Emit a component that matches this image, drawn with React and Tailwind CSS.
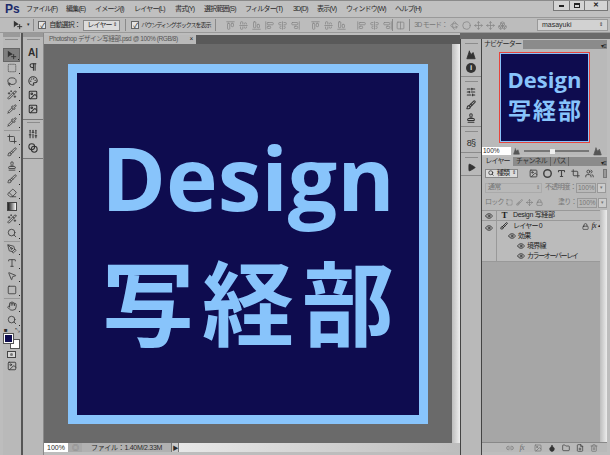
import { SquareDashed, Lasso, Wand2, Pipette, Brush, Stamp, Eraser, PenTool, Type, MousePointer2, Square, Hand, Search, Pilcrow, Palette, Image, Sliders, Eye, Lock, Link2, Folder, FilePlus, Trash2, Circle, Play, SlidersHorizontal, Crop, Blend, Boxes, Rotate3d, Mountain, Users, Droplet, Move, AlignStartVertical, AlignCenterVertical, AlignEndVertical, AlignStartHorizontal, AlignCenterHorizontal, AlignEndHorizontal, Columns2 } from "lucide-react";

const menus = [
  ["ファイル(F)", "w-[40px]"],
  ["編集(E)", "w-[29px]"],
  ["イメージ(I)", "w-[39px]"],
  ["レイヤー(L)", "w-[41px]"],
  ["書式(Y)", "w-[29px]"],
  ["選択範囲(S)", "w-[41px]"],
  ["フィルター(T)", "w-[48px]"],
  ["3D(D)", "w-[24px]"],
  ["表示(V)", "w-[29px]"],
  ["ウィンドウ(W)", "w-[49px]"],
  ["ヘルプ(H)", "w-[40px]"],
];

// arrow with a small cross, Photoshop's move tool
function MoveTool({ size = 11 }) {
  return (
    <svg width={size} height={size} viewBox="0 0 12 12" className="shrink-0 text-[#333]">
      <path d="M1 1 L1 9 L3 7 L7 5 Z" fill="currentColor" />
      <path d="M8 5 V11 M5 8 H11" stroke="currentColor" strokeWidth="1.2" />
    </svg>
  );
}

const toolsA = [
  [MoveTool, true], [SquareDashed], [Lasso], [Wand2], [Pipette], [Pipette],
  "sep", [Crop], [Brush], [Stamp], [Brush], [Eraser], "grad", [Wand2], [Search],
  "sep", [PenTool], [Type], [MousePointer2], [Square],
  "sep", [Hand], [Search],
];

function Tool({ Icon, active }) {
  return (
    <div className={`relative flex h-[13.5px] w-[17px] shrink-0 items-center justify-center ${active ? "bg-[#7f7f7f] border border-[#666]" : ""}`}>
      <Icon size={10} strokeWidth={2} className="text-[#3a3a3a]" />
      <span className="absolute bottom-[1px] right-0 h-[1px] w-[1px] bg-[#222]" />
    </div>
  );
}

function Grip() {
  return <div className="my-[2px] h-[1px] w-[13px] shrink-0 bg-[#8c8c8c]" />;
}

function PanelIcon({ Icon }) {
  return <Icon size={10} strokeWidth={2.5} className="shrink-0 text-[#333]" />;
}

function OptIcon({ Icon }) {
  return <Icon size={9} strokeWidth={2} className="shrink-0 text-[#858585]" />;
}

function Check() {
  return (
    <span className="flex h-[8px] w-[8px] shrink-0 items-center justify-center border border-[#666] bg-[#e4e4e4] text-[7px] leading-none text-[#222]">✓</span>
  );
}

function LayerRow({ children, className = "" }) {
  return <div className={`flex items-center text-[#222] ${className}`}>{children}</div>;
}

function EyeIcon() {
  return <Eye size={8} strokeWidth={2.5} className="shrink-0 text-[#333]" />;
}

export default function App() {
  return (
    <div className="flex h-[455px] w-[610px] flex-col overflow-hidden bg-[#bdbdbd] font-['Liberation_Sans','Noto_Sans_CJK_JP',sans-serif] text-[7px] tracking-[-0.8px] text-[#2b2b2b]">
      {/* menu bar */}
      <div className="flex h-[17px] shrink-0 items-center border-t border-[#8a8a8a] bg-[#c0c0c0]">
        <span className="ml-[5px] w-[21px] text-[12px] font-bold leading-none tracking-normal text-[#1b2a6b]">Ps</span>
        {menus.map(([label, w]) => (
          <span key={label} className={`${w} whitespace-nowrap`}>{label}</span>
        ))}
        <div className="ml-auto mr-[2px] flex h-[10px] w-[55px] self-start border border-t-0 border-[#777] bg-[#d4d4d4] text-[#222]">
          <span className="flex flex-1 items-center justify-center border-r border-[#777]"><span className="h-[2px] w-[5px] bg-[#222]" /></span>
          <span className="flex flex-1 items-center justify-center border-r border-[#777]"><span className="h-[5px] w-[6px] border border-t-2 border-[#222]" /></span>
          <span className="flex w-[22px] items-center justify-center text-[7px] font-bold">✕</span>
        </div>
      </div>

      {/* options bar */}
      <div className="flex h-[16px] shrink-0 items-center border-y border-[#999] bg-[#bcbcbc] pl-[13px]">
        <MoveTool size={10} />
        <span className="ml-[4px] text-[5px]">▾</span>
        <div className="mx-[4px] h-[12px] w-[1px] bg-[#8a8a8a]" />
        <Check />
        <span className="ml-[3px] w-[34px] whitespace-nowrap">自動選択：</span>
        <span className="flex h-[11px] w-[37px] items-center justify-between border border-[#888] bg-[#dcdcdc] px-[3px]">レイヤー<span className="text-[5px]">⇕</span></span>
        <div className="mx-[5px] h-[12px] w-[1px] bg-[#8a8a8a]" />
        <Check />
        <span className="ml-[2px] w-[70px] whitespace-nowrap text-[6px] tracking-[-1px]">バウンディングボックスを表示</span>
        <div className="mx-[4px] h-[12px] w-[1px] bg-[#8a8a8a]" />
        <div className="ml-[6px] flex w-[166px] items-center gap-[4px]">
          <OptIcon Icon={AlignStartHorizontal} />
          <OptIcon Icon={AlignCenterHorizontal} />
          <OptIcon Icon={AlignEndHorizontal} />
          <OptIcon Icon={AlignStartVertical} />
          <OptIcon Icon={AlignCenterVertical} />
          <OptIcon Icon={AlignEndVertical} />
          <span className="w-[3px]" />
          <OptIcon Icon={AlignStartHorizontal} />
          <OptIcon Icon={AlignCenterHorizontal} />
          <OptIcon Icon={AlignEndHorizontal} />
          <span className="w-[3px]" />
          <OptIcon Icon={AlignStartVertical} />
          <OptIcon Icon={AlignCenterVertical} />
          <OptIcon Icon={AlignEndVertical} />
        </div>
        <div className="h-[12px] w-[1px] bg-[#8a8a8a]" />
        <span className="ml-[3px]"><OptIcon Icon={Columns2} /></span>
        <div className="mx-[4px] h-[12px] w-[1px] bg-[#8a8a8a]" />
        <span className="w-[36px] whitespace-nowrap text-[#777]">3D モード：</span>
        <div className="flex items-center gap-[3px]">
          <OptIcon Icon={Rotate3d} />
          <OptIcon Icon={Circle} />
          <OptIcon Icon={Move} />
          <OptIcon Icon={Move} />
          <OptIcon Icon={Boxes} />
        </div>
        <div className="ml-auto mr-[2px] flex h-[12px] w-[71px] items-center justify-between border border-[#999] bg-[#d2d2d2] px-[4px] tracking-normal">masayuki<span className="text-[5px]">⇕</span></div>
      </div>

      {/* work area */}
      <div className="flex min-h-0 flex-1">
        {/* tools */}
        <div className="flex w-[44px] shrink-0 pl-[3px]">
          <div className="flex w-[20px] flex-col items-center border-r-2 border-[#555] bg-[#b9b9b9] pr-px">
            <div className="h-[4px] w-full shrink-0 bg-[#9a9a9a]" />
            <Grip />
            <div className="mt-[6px] flex flex-col items-center">
              {toolsA.map((t, i) => {
                if (t === "sep") return <div key={i} className="my-[1px] h-[1px] w-[16px] bg-[#999]" />;
                if (t === "grad") return <div key={i} className="my-[2px] h-[9px] w-[10px] border border-[#444] bg-gradient-to-r from-[#222] to-white" />;
                return <Tool key={i} Icon={t[0]} active={t[1]} />;
              })}
            </div>
            <div className="flex w-[15px] justify-between text-[6px] leading-none"><span>■</span><span>⤡</span></div>
            <div className="relative mt-[1px] h-[15px] w-[16px] shrink-0">
              <div className="absolute bottom-0 right-0 h-[10px] w-[10px] border border-[#555] bg-white" />
              <div className="absolute left-0 top-0 h-[9px] w-[9px] border border-white bg-[#0e0c4f] outline outline-[#555]" />
            </div>
            <div className="mt-[2px] flex h-[7px] w-[9px] items-center justify-center border border-[#444] bg-[#d8d8d8]"><span className="h-[3px] w-[3px] rounded-full bg-[#777]" /></div>
            <Image size={10} strokeWidth={2} className="mt-[3px] text-[#333]" />
          </div>
          <div className="flex w-[21px] flex-col items-center border-r border-[#8a8a8a] bg-[#b9b9b9]">
            <div className="h-[4px] w-full shrink-0 bg-[#9a9a9a]" />
            <Grip />
            <div className="mt-[6px] flex h-[72px] w-full flex-col items-center gap-[4px] border-b border-[#777]">
              <span className="text-[10px] font-bold leading-[10px] tracking-normal">A|</span>
              <Pilcrow size={10} strokeWidth={2.5} className="text-[#333]" />
              <Palette size={10} strokeWidth={2.5} className="text-[#333]" />
              <Image size={10} strokeWidth={2.5} className="text-[#333]" />
              <Image size={10} strokeWidth={2.5} className="text-[#333]" />
            </div>
            <Grip />
            <div className="mt-[4px] flex h-[30px] w-full flex-col items-center gap-[4px] border-b border-[#777]">
              <Sliders size={10} strokeWidth={2.5} className="text-[#333]" />
              <Blend size={10} strokeWidth={2.5} className="text-[#333]" />
            </div>
          </div>
        </div>

        {/* document */}
        <div className="flex min-w-0 flex-1 flex-col">
          <div className="mt-[2px] flex h-[9px] shrink-0 items-end bg-[#595959]">
            <div className="flex h-[9px] w-[152px] items-center justify-between bg-[#b9b9b9] pl-[5px] pr-[3px] text-[6.5px] leading-none tracking-[-0.4px] text-[#555]">
              <span className="whitespace-nowrap">Photoshop デザイン写経部.psd @ 100% (RGB/8)</span>
              <span className="text-[#222]">×</span>
            </div>
          </div>
          <div className="flex min-h-0 flex-1">
            <div className="flex flex-1 items-center justify-center bg-[#6a6a6a]">
              <div className="flex h-[360px] w-[360px] border-[9px] border-[#88c4fb] bg-[#0e0c4f]">
                <div className="flex w-full flex-col items-center text-[#88c4fb]">
                  <span className="mt-[54px] font-['Open_Sans',sans-serif] text-[87.5px] font-bold leading-[100px] tracking-normal">Design</span>
                  <span className="mt-[22px] whitespace-nowrap pl-[8px] font-['Noto_Sans_CJK_JP',sans-serif] text-[92px] font-bold leading-[100px] tracking-[8px]">写経部</span>
                </div>
              </div>
            </div>
            <div className="w-[8px] shrink-0 bg-gradient-to-r from-[#bdbdbd] to-[#efefef]" />
          </div>
          <div className="flex h-[9px] shrink-0 items-center bg-[#c9c9c9] leading-none">
            <span className="flex h-full w-[24px] items-center justify-center bg-white tracking-normal">100%</span>
            <span className="flex h-full w-[14px] items-center justify-center bg-[#a9a9a9] text-[#777]">◎</span>
            <span className="flex h-full w-[89px] items-center justify-center bg-[#b1b1b1] tracking-[-0.3px]">ファイル：1.40M/2.33M</span>
            <span className="flex h-full w-[8px] items-center justify-center border-x border-[#777] bg-[#c9c9c9] text-[6px]">▶</span>
            <span className="h-full flex-1 bg-gradient-to-r from-[#e8e8e8] to-[#bdbdbd]" />
          </div>
          <div className="h-[3px] shrink-0 bg-[#bdbdbd]" />
        </div>

        {/* panel dock */}
        <div className="flex w-[150px] shrink-0 flex-col">
          <div className="h-[6px] shrink-0 bg-[#6a6a6a]" />
          <div className="flex min-h-0 flex-1">
            <div className="flex w-[22px] shrink-0 flex-col items-center border-x border-[#444] bg-[#b9b9b9] pt-[2px]">
              <Grip />
              <div className="mt-[4px] flex flex-col items-center gap-[3px]">
                <Mountain size={10} fill="#333" strokeWidth={2} className="shrink-0 text-[#333]" />
                <span className="flex h-[10px] w-[10px] items-center justify-center rounded-full bg-[#333] text-[8px] font-bold leading-none tracking-normal text-[#ddd]">i</span>
              </div>
              <div className="mb-[2px] mt-[3px] h-[1px] w-full bg-[#8a8a8a]" />
              <Grip />
              <div className="mt-[3px] flex flex-col items-center gap-[3px]">
                <PanelIcon Icon={SlidersHorizontal} />
                <PanelIcon Icon={Brush} />
                <PanelIcon Icon={Stamp} />
              </div>
              <div className="mb-[2px] mt-[3px] h-[1px] w-full bg-[#8a8a8a]" />
              <Grip />
              <span className="mt-[4px] text-[9px] leading-[10px]">8§</span>
              <div className="mb-[2px] mt-[4px] h-[1px] w-full bg-[#8a8a8a]" />
              <Grip />
              <Play size={9} fill="#333" className="mt-[3px] text-[#333]" />
              <div className="mt-[3px] h-[1px] w-full bg-[#8a8a8a]" />
            </div>
            <div className="flex min-w-0 flex-1 flex-col pb-[3px] pr-[3px]">
              {/* navigator */}
              <div className="mt-px flex h-[9px] shrink-0 items-end bg-[#8b8b8b]">
                <span className="flex h-[9px] w-[41px] items-center justify-center whitespace-nowrap bg-[#b9b9b9]">ナビゲーター</span>
                <span className="ml-auto mr-[1px] text-[6px] leading-none text-[#222]">▾≡</span>
              </div>
              <div className="flex h-[98px] shrink-0 flex-col items-center bg-[#b9b9b9] pt-[3px]">
                <div className="flex h-[91px] w-[91px] border border-[#e8453c] bg-[#88c4fb] p-[1px]">
                  <div className="flex w-full flex-col items-center bg-[#0e0c4f] text-[#88c4fb]">
                    <span className="mt-[12px] font-['Open_Sans',sans-serif] text-[22px] font-bold leading-[26px] tracking-normal">Design</span>
                    <span className="mt-[4px] whitespace-nowrap pl-[2px] font-['Noto_Sans_CJK_JP',sans-serif] text-[23px] font-bold leading-[26px] tracking-[2px]">写経部</span>
                  </div>
                </div>
              </div>
              <div className="flex h-[8px] shrink-0 items-center bg-[#b9b9b9]">
                <span className="flex h-full w-[29px] items-center bg-white pl-px text-[6.5px] tracking-normal">100%</span>
                <Mountain size={7} fill="#555" className="ml-[2px] text-[#555]" />
                <div className="relative mx-[4px] h-[2px] flex-1 bg-[#777]">
                  <span className="absolute left-[26px] top-[-1px] h-[5px] w-[5px] bg-[#eee]" />
                </div>
                <Mountain size={9} fill="#555" className="mr-[5px] text-[#555]" />
              </div>

              {/* layers */}
              <div className="mt-[2px] flex h-[9px] shrink-0 items-end bg-[#8b8b8b]">
                <span className="flex h-full w-[31px] items-center justify-center bg-[#b9b9b9]">レイヤー</span>
                <span className="flex h-full w-[38px] items-center justify-center border-r border-[#666] text-[#333]">チャンネル</span>
                <span className="flex h-full w-[18px] items-center justify-center border-r border-[#666] text-[#333]">パス</span>
                <span className="ml-auto mr-[1px] text-[6px] leading-none text-[#222]">▾≡</span>
              </div>
              <div className="flex h-[14px] shrink-0 items-center bg-[#b9b9b9] pl-[3px]">
                <span className="flex h-[9px] w-[33px] items-center justify-between border border-[#888] bg-[#dcdcdc] px-[2px]"><Search size={6} strokeWidth={3} />種類<span className="text-[5px]">⇕</span></span>
                <div className="ml-[11px] flex items-center gap-[5px] text-[#444]">
                  <Image size={9} strokeWidth={2.5} />
                  <Circle size={9} strokeWidth={4} />
                  <Type size={9} strokeWidth={3} />
                  <Crop size={9} strokeWidth={2.5} />
                  <Users size={9} strokeWidth={2.5} />
                </div>
                <span className="ml-[9px] h-[9px] w-[4px] border border-[#777] bg-[#999]" />
              </div>
              <div className="flex h-[15px] shrink-0 items-center bg-[#b9b9b9] pl-[3px] text-[#777]">
                <span className="flex h-[10px] w-[57px] items-center justify-between border border-[#aaa] px-[2px]">通常<span className="text-[5px]">⇕</span></span>
                <span className="ml-[3px] w-[31px] whitespace-nowrap">不透明度：</span>
                <span className="flex h-[10px] w-[20px] items-center border border-[#999] pl-px text-[6.5px] tracking-normal">100%</span>
                <span className="ml-px flex h-[10px] w-[9px] items-center justify-center border border-[#999] bg-[#ccc] text-[5px]">▾</span>
              </div>
              <div className="flex h-[15px] shrink-0 items-center bg-[#b9b9b9] pl-[3px] text-[#777]">
                <span className="w-[21px] whitespace-nowrap">ロック：</span>
                <div className="flex items-center gap-[3px]">
                  <SquareDashed size={7} />
                  <Brush size={7} />
                  <Move size={7} />
                  <Lock size={7} />
                </div>
                <span className="ml-[15px] w-[19px] whitespace-nowrap">塗り：</span>
                <span className="flex h-[10px] w-[20px] items-center border border-[#999] pl-px text-[6.5px] tracking-normal">100%</span>
                <span className="ml-px flex h-[10px] w-[9px] items-center justify-center border border-[#999] bg-[#ccc] text-[5px]">▾</span>
              </div>
              <div className="flex min-h-0 flex-1">
                <div className="flex min-w-0 flex-1 flex-col bg-[#a6a6a6]">
                  <LayerRow className="h-[11px] border-y border-[#999] bg-[#bbb]">
                    <span className="flex h-full w-[15px] items-center justify-center border-r border-[#999]"><EyeIcon /></span>
                    <span className="flex w-[14px] justify-center font-['Liberation_Serif',serif] text-[9px] font-bold">T</span>
                    <span className="ml-[2px] whitespace-nowrap tracking-[-0.3px]">Design 写経部</span>
                  </LayerRow>
                  <div className="flex h-[41px] border-b border-[#999] bg-[#bbb]">
                    <div className="flex w-[15px] justify-center border-r border-[#999] pt-[3px]"><EyeIcon /></div>
                    <div className="flex min-w-0 flex-1 flex-col">
                      <LayerRow className="h-[10px]">
                        <span className="flex w-[14px] justify-center"><Brush size={8} strokeWidth={2.5} /></span>
                        <span className="ml-[2px] whitespace-nowrap">レイヤー 0</span>
                        <Lock size={7} className="ml-auto" />
                        <span className="ml-[3px] font-['Liberation_Serif',serif] text-[8px] italic">fx</span>
                        <span className="ml-[2px] text-[5px]">▴</span>
                      </LayerRow>
                      <LayerRow className="h-[10px] pl-[11px]"><EyeIcon /><span className="ml-[2px]">効果</span></LayerRow>
                      <LayerRow className="h-[10px] pl-[20px]"><EyeIcon /><span className="ml-[2px]">境界線</span></LayerRow>
                      <LayerRow className="h-[10px] pl-[20px]"><EyeIcon /><span className="ml-[2px] whitespace-nowrap tracking-[-1.4px]">カラーオーバーレイ</span></LayerRow>
                    </div>
                  </div>
                </div>
                <div className="w-[7px] shrink-0 bg-gradient-to-r from-[#bdbdbd] to-[#ececec]" />
              </div>
              <div className="flex h-[10px] shrink-0 items-center justify-center gap-[6px] border-t border-[#888] bg-[#b9b9b9] pl-[14px] text-[#6f6f6f]">
                <Link2 size={8} />
                <span className="w-[8px] font-['Liberation_Serif',serif] text-[8px] italic">fx</span>
                <Image size={8} />
                <Droplet size={8} fill="#333" className="text-[#333]" />
                <Folder size={8} className="text-[#333]" />
                <FilePlus size={8} className="text-[#333]" />
                <Trash2 size={8} />
              </div>
            </div>
          </div>
        </div>
      </div>
    </div>
  );
}
